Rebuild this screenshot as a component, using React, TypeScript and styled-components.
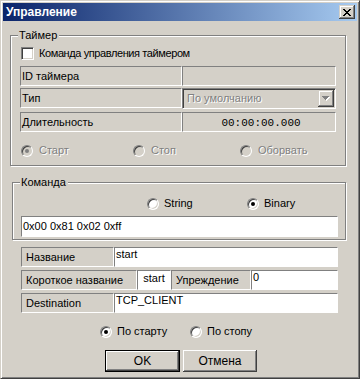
import styled, { createGlobalStyle } from 'styled-components';

const GlobalStyle = createGlobalStyle`
  html, body {
    margin: 0;
    padding: 0;
    background: #d4d0c8;
  }
  body {
    font-family: "Liberation Sans", Arial, sans-serif;
    font-size: 11px;
    color: #000;
  }
`;

const Window = styled.div`
  box-sizing: border-box;
  width: 360px;
  height: 379px;
  padding: 2px;
  background: #d4d0c8;
  border: 1px solid;
  border-color: #d4d0c8 #404040 #404040 #d4d0c8;
  box-shadow: inset 1px 1px #fff, inset -1px -1px #808080;
  display: flex;
  flex-direction: column;
`;

const TitleBar = styled.div`
  height: 18px;
  padding: 0 2px 0 3px;
  display: flex;
  align-items: center;
  justify-content: space-between;
  background: linear-gradient(to right, #0a246a, #a6caf0);
`;

const TitleText = styled.span`
  color: #fff;
  font-weight: bold;
  font-size: 12px;
  line-height: 14px;
`;

const RaisedButton = styled.div`
  box-sizing: border-box;
  background: #d4d0c8;
  box-shadow: inset -1px -1px #404040, inset 1px 1px #d4d0c8,
    inset -2px -2px #808080, inset 2px 2px #fff;
  display: flex;
  align-items: center;
  justify-content: center;
`;

const CloseButton = styled(RaisedButton)`
  width: 16px;
  height: 14px;
  padding-right: 1px;
`;

const Body = styled.div`
  padding: 14px 0 0 7px;
  display: flex;
  flex-direction: column;
  align-items: flex-start;
`;

const Group = styled.div<{ $w: number; $h: number; $mt?: number; $ml?: number }>`
  position: relative;
  box-sizing: border-box;
  width: ${(p) => p.$w}px;
  height: ${(p) => p.$h}px;
  margin-top: ${(p) => p.$mt ?? 0}px;
  margin-left: ${(p) => p.$ml ?? 0}px;
  border: 1px solid #808080;
  box-shadow: inset 1px 1px #fff, 1px 1px #fff;
  display: flex;
  flex-direction: column;
  align-items: flex-start;
`;

const Legend = styled.span`
  position: absolute;
  top: -7px;
  left: 7px;
  padding: 0 2px 0 1px;
  background: #d4d0c8;
  line-height: 13px;
`;

const Row = styled.div<{ $mt?: number; $ml?: number; $gap?: number }>`
  display: flex;
  align-items: flex-start;
  gap: ${(p) => p.$gap ?? 0}px;
  margin-top: ${(p) => p.$mt ?? 0}px;
  margin-left: ${(p) => p.$ml ?? 0}px;
`;

const Cell = styled.div<{ $w: number; $h?: number; $white?: boolean; $pl?: number; $center?: boolean; $pt?: number }>`
  box-sizing: border-box;
  width: ${(p) => p.$w}px;
  height: ${(p) => p.$h ?? 20}px;
  padding: ${(p) => p.$pt ?? 3}px 0 0 ${(p) => p.$pl ?? 4}px;
  border-style: solid;
  border-width: 1px;
  border-color: #808080 #fff #fff #808080;
  background: ${(p) => (p.$white ? '#fff' : '#d4d0c8')};
  text-align: ${(p) => (p.$center ? 'center' : 'left')};
  line-height: 13px;
  white-space: nowrap;
  overflow: hidden;
`;

const MonoValue = styled.span`
  font-family: "Liberation Mono", "Courier New", monospace;
  font-size: 11px;
`;

const Combo = styled.div`
  box-sizing: border-box;
  width: 154px;
  height: 21px;
  border: 1px solid;
  border-color: #808080 #fff #fff #808080;
  box-shadow: inset 1px 1px #404040, inset -1px -1px #d4d0c8;
  padding: 1px;
  display: flex;
  align-items: center;
  justify-content: space-between;
`;

const Disabled = styled.span`
  color: #808080;
  text-shadow: 1px 1px 0 #fff;
  line-height: 13px;
  white-space: nowrap;
`;

const ComboText = styled(Disabled)`
  padding-left: 3px;
`;

const DropButton = styled(RaisedButton)`
  width: 16px;
  height: 17px;
`;

const Check = styled.span`
  box-sizing: border-box;
  width: 13px;
  height: 13px;
  background: #fff;
  border: 1px solid;
  border-color: #808080 #fff #fff #808080;
  box-shadow: inset 1px 1px #404040, inset -1px -1px #d4d0c8;
`;

const Option = styled.label<{ $w?: number; $gap?: number; $mt?: number; $ml?: number; $tight?: boolean }>`
  display: flex;
  align-items: center;
  gap: ${(p) => p.$gap ?? 5}px;
  width: ${(p) => (p.$w ? `${p.$w}px` : 'auto')};
  margin-top: ${(p) => p.$mt ?? 0}px;
  margin-left: ${(p) => p.$ml ?? 0}px;
  height: 13px;
  line-height: 13px;
  white-space: nowrap;
  letter-spacing: ${(p) => (p.$tight ? '-0.4px' : 'normal')};
`;

const Radio = styled.span<{ $checked?: boolean; $disabled?: boolean }>`
  position: relative;
  box-sizing: border-box;
  flex: none;
  width: 12px;
  height: 12px;
  border-radius: 50%;
  border: 1px solid;
  border-color: #808080 #fff #fff #808080;
  box-shadow: inset 1px 1px #404040, inset -1px -1px #d4d0c8;
  background: ${(p) => (p.$disabled ? '#d4d0c8' : '#fff')};
  &::after {
    content: '';
    display: ${(p) => (p.$checked ? 'block' : 'none')};
    position: absolute;
    left: 3px;
    top: 3px;
    width: 4px;
    height: 4px;
    border-radius: 50%;
    background: ${(p) => (p.$disabled ? '#808080' : '#000')};
  }
`;

const Input = styled.div<{ $w: number; $h: number }>`
  box-sizing: border-box;
  width: ${(p) => p.$w}px;
  height: ${(p) => p.$h}px;
  padding: 3px 0 0 1px;
  background: #fff;
  border: 1px solid;
  border-color: #808080 #fff #fff #808080;
  line-height: 13px;
`;

const Button = styled.div<{ $w: number; $default?: boolean }>`
  box-sizing: border-box;
  width: ${(p) => p.$w}px;
  height: 22px;
  background: #d4d0c8;
  border: ${(p) => (p.$default ? '1px solid #000' : 'none')};
  box-shadow: inset -1px -1px #404040, inset 1px 1px #fff,
    inset -2px -2px #808080, inset 2px 2px #d4d0c8;
  display: flex;
  align-items: center;
  justify-content: center;
  line-height: 13px;
  font-size: 12px;
`;

const xPixels = ['11000011', '01100110', '00111100', '00011000', '00111100', '01100110', '11000011'];

const CloseIcon = () => (
  <svg width='8' height='7' viewBox='0 0 8 7' shapeRendering='crispEdges'>
    {xPixels.map((line, y) =>
      line.split('').map((c, x) => (c === '1' ? <rect key={`${x}-${y}`} x={x} y={y} width='1' height='1' fill='#000' /> : null))
    )}
  </svg>
);

const DropArrow = () => (
  <svg width='8' height='5' viewBox='0 0 8 5' shapeRendering='crispEdges'>
    <path d='M1 1h7v1h-1v1h-1v1h-1v1h-1v-1h-1v-1h-1v-1h-1z' fill='#fff' />
    <path d='M0 0h7v1h-1v1h-1v1h-1v1h-1v-1h-1v-1h-1v-1h-1z' fill='#808080' />
  </svg>
);

const App = () => {
  return (
    <>
      <GlobalStyle />
      <Window>
        <TitleBar>
          <TitleText>Управление</TitleText>
          <CloseButton>
            <CloseIcon />
          </CloseButton>
        </TitleBar>

        <Body>
          <Group $w={336} $h={131}>
            <Legend>Таймер</Legend>
            <Option $gap={5} $mt={11} $ml={10} $tight>
              <Check />
              Команда управления таймером
            </Option>
            <Row $mt={6} $ml={9}>
              <Cell $w={162} $pl={1}>ID таймера</Cell>
              <Cell $w={154} />
            </Row>
            <Row $mt={2} $ml={9}>
              <Cell $w={162} $pl={1}>Тип</Cell>
              <Combo>
                <ComboText>По умолчанию</ComboText>
                <DropButton>
                  <DropArrow />
                </DropButton>
              </Combo>
            </Row>
            <Row $mt={3} $ml={9}>
              <Cell $w={162} $pl={1}>Длительность</Cell>
              <Cell $w={154} $center>
                <MonoValue>00:00:00.000</MonoValue>
              </Cell>
            </Row>
            <Row $mt={12} $ml={10}>
              <Option $w={112} $gap={6}>
                <Radio $checked $disabled />
                <Disabled>Старт</Disabled>
              </Option>
              <Option $w={107} $gap={6}>
                <Radio $disabled />
                <Disabled>Стоп</Disabled>
              </Option>
              <Option $gap={6}>
                <Radio $disabled />
                <Disabled>Оборвать</Disabled>
              </Option>
            </Row>
          </Group>

          <Group $w={334} $h={58} $mt={16} $ml={2}>
            <Legend>Команда</Legend>
            <Row $mt={14} $ml={134}>
              <Option $w={100}>
                <Radio />
                String
              </Option>
              <Option>
                <Radio $checked />
                Binary
              </Option>
            </Row>
            <Row $mt={6} $ml={8}>
              <Input $w={317} $h={21}>0x00 0x81 0x02 0xff</Input>
            </Row>
          </Group>

          <Row $mt={7} $ml={11}>
            <Cell $w={93}>Название</Cell>
            <Cell $w={224} $white $pl={1} $pt={0}>start</Cell>
          </Row>
          <Row $mt={3} $ml={11}>
            <Cell $w={116}>Короткое название</Cell>
            <Cell $w={34} $white $center $pl={0} $pt={1}>start</Cell>
            <Cell $w={80}>Упреждение</Cell>
            <Cell $w={87} $white $pl={1} $pt={0}>0</Cell>
          </Row>
          <Row $mt={3} $ml={11}>
            <Cell $w={93}>Destination</Cell>
            <Cell $w={224} $white $pl={1} $pt={0}>TCP_CLIENT</Cell>
          </Row>

          <Row $mt={12} $ml={90}>
            <Option $w={90}>
              <Radio $checked />
              По старту
            </Option>
            <Option>
              <Radio />
              По стопу
            </Option>
          </Row>

          <Row $mt={12} $ml={95} $gap={3}>
            <Button $w={75} $default>OK</Button>
            <Button $w={74}>Отмена</Button>
          </Row>
        </Body>
      </Window>
    </>
  );
};

export default App;
